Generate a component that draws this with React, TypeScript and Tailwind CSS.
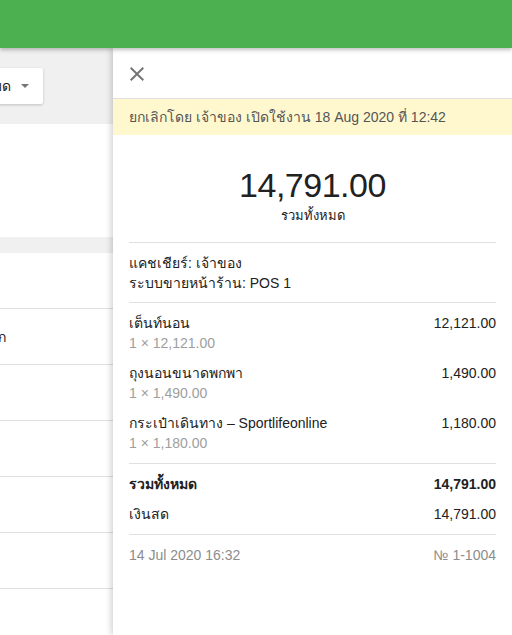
import React from "react";

const font = { fontFamily: '"Liberation Sans", Arial, "Noto Sans", sans-serif' };

function Row({ children }: { children?: React.ReactNode }) {
  return (
    <div className="h-[56px] border-b border-[#e0e0e0] flex items-center text-[14px] text-[#212121]">
      {children}
    </div>
  );
}

export default function App() {
  return (
    <div className="relative w-[512px] h-[635px] overflow-hidden bg-white" style={font}>
      {/* header */}
      <div className="relative z-20 h-[48px] bg-[#4caf50] shadow-[0_2px_4px_rgba(0,0,0,0.25)]" />

      {/* underlying page */}
      <div className="flex flex-col">
        <div className="h-[76px] bg-[#f0f0f0] flex items-center">
          <div className="ml-[-60px] h-[36px] w-[103px] bg-white rounded-[2px] shadow-[0_1px_3px_rgba(0,0,0,0.2)] flex items-center justify-end pr-[14px] gap-[10px] text-[14px] text-[#212121]">
            <span className="leading-[20px]">หมด</span>
            <span className="w-0 h-0 border-l-[4px] border-r-[4px] border-t-[4px] border-l-transparent border-r-transparent border-t-[#757575]" />
          </div>
        </div>
        <div className="h-[113px] bg-white shadow-[0_2px_3px_rgba(0,0,0,0.12)]" />
        <div className="h-[16px] bg-[#f0f0f0]" />
        <div className="bg-white">
          <Row />
          <Row>
            <span className="ml-[-50px] leading-[20px]">ประเภทก</span>
          </Row>
          <Row />
          <Row />
          <Row />
          <Row />
          <Row />
        </div>
      </div>

      {/* drawer */}
      <div className="absolute z-10 top-[48px] bottom-0 left-[113px] right-0 bg-white shadow-[-2px_0_6px_rgba(0,0,0,0.18)] flex flex-col">
        <div className="h-[50px] flex items-center pl-[12px] shrink-0">
          <svg width="24" height="24" viewBox="0 0 24 24" className="mt-[2px]">
            <path
              fill="#757575"
              d="M19 6.41L17.59 5 12 10.59 6.41 5 5 6.41 10.59 12 5 17.59 6.41 19 12 13.41 17.59 19 19 17.59 13.41 12z"
            />
          </svg>
        </div>
        <div className="border-t border-[#e0e0e0] h-[37px] bg-[#fff8cf] px-[16px] flex items-center text-[14px] text-[#555555] shrink-0">
          <span className="leading-[20px]">ยกเลิกโดย เจ้าของ เปิดใช้งาน 18 Aug 2020 ที่ 12:42</span>
        </div>

        <div className="px-[16px]">
          <div className="pt-[30px] pb-[17px] flex flex-col items-center">
            <div className="text-[34px] leading-[40px] tracking-[-0.5px] text-[#212121]">14,791.00</div>
            <div className="mt-[2px] text-[13px] leading-[18px] text-[#212121]">รวมทั้งหมด</div>
          </div>

          <div className="border-t border-[#e0e0e0] pt-[10px] pb-[9px] text-[14px] leading-[20px] text-[#212121]">
            <div>แคชเชียร์: เจ้าของ</div>
            <div>ระบบขายหน้าร้าน: POS 1</div>
          </div>

          <div className="border-t border-[#e0e0e0] pt-[10px] pb-[10px] flex flex-col gap-[10px] text-[14px] leading-[20px]">
            {[
              ["เต็นท์นอน", "12,121.00"],
              ["ถุงนอนขนาดพกพา", "1,490.00"],
              ["กระเป๋าเดินทาง – Sportlifeonline", "1,180.00"],
            ].map(([name, price]) => (
              <div key={name}>
                <div className="flex justify-between text-[#212121]">
                  <span>{name}</span>
                  <span>{price}</span>
                </div>
                <div className="text-[#9e9e9e]">1 × {price}</div>
              </div>
            ))}
          </div>

          <div className="border-t border-[#e0e0e0] pt-[10px] pb-[10px] flex flex-col gap-[10px] text-[14px] leading-[20px] text-[#212121]">
            <div className="flex justify-between font-bold">
              <span>รวมทั้งหมด</span>
              <span>14,791.00</span>
            </div>
            <div className="flex justify-between">
              <span>เงินสด</span>
              <span>14,791.00</span>
            </div>
          </div>

          <div className="border-t border-[#e0e0e0] pt-[10px] flex justify-between text-[14px] leading-[20px] text-[#8c8c8c]">
            <span>14 Jul 2020 16:32</span>
            <span>№ 1-1004</span>
          </div>
        </div>
      </div>
    </div>
  );
}
